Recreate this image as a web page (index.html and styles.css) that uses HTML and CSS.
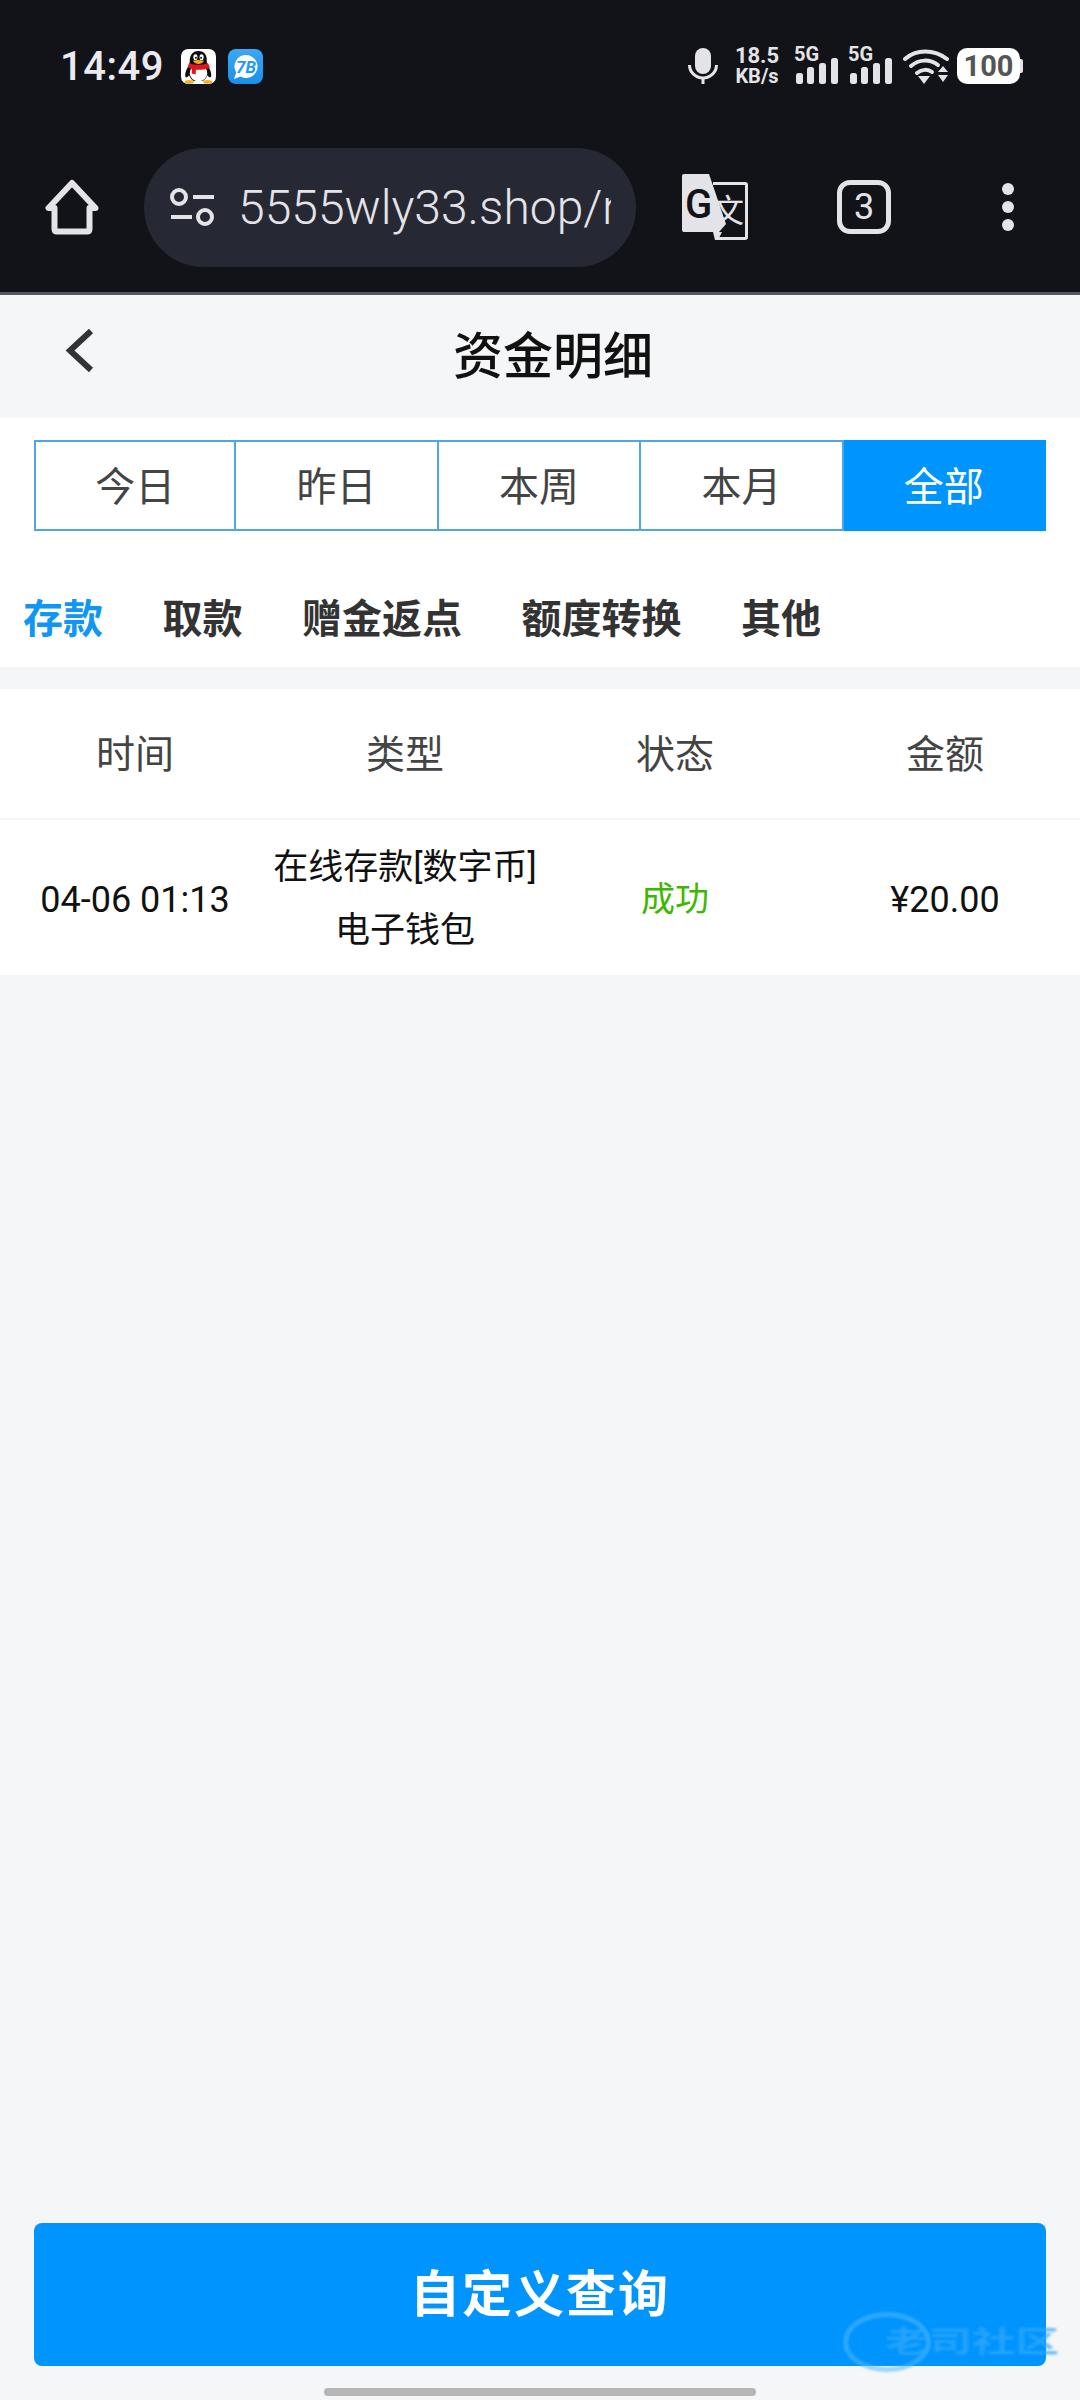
FILE: index.html
```html
<!DOCTYPE html>
<html lang="zh-CN">
<head>
<meta charset="utf-8">
<title>资金明细</title>
<link rel="stylesheet" href="styles.css">
</head>
<body>
<div class="page">
  <div class="chrome">
    <div class="status">
      <span class="time">14:49</span>
      <svg class="app app-qq" viewBox="0 0 34 34">
        <rect width="34" height="34" rx="7" fill="#fff"/>
        <ellipse cx="8" cy="32" rx="4.500" ry="1.800" fill="#f5b01c"/>
        <ellipse cx="26" cy="32" rx="4.500" ry="1.800" fill="#f5b01c"/>
        <path d="M17 2c-6 0-8.500 4.500-8.500 10 0 3-1.500 5-2.800 7.500C4 23 3.500 27 5 27.500c1 .2 2-.8 2.800-2 1 2.500 2.700 4.800 4.700 5.500h8.500c2-.7 3.700-3 4.700-5.500.8 1.200 1.800 2.200 2.800 2 1.500-.5 1-4.500-.7-8-1.300-2.500-2.800-4.500-2.800-7.500C25.500 6.500 23 2 17 2z" fill="#0c0c0e"/>
        <ellipse cx="17" cy="23.500" rx="8.500" ry="8" fill="#fff"/>
        <path d="M8 13.500c5 2.500 13 2.500 18 0 1 1.800 1.800 3.200 2 4.500-2.500 1.300-5 2-8 2.200H14.500l-.3 4.500-3.800-1 .2-4.500c-1.500-.3-2.800-.7-4-1.400.2-1.300.6-2.800 1.400-4.300z" fill="#e0161b"/>
        <ellipse cx="14" cy="8" rx="2" ry="2.800" fill="#fff"/>
        <ellipse cx="20" cy="8" rx="2" ry="2.800" fill="#fff"/>
        <circle cx="14.500" cy="8.500" r="1" fill="#111"/>
        <circle cx="19.500" cy="8.500" r="1" fill="#111"/>
        <path d="M11.500 11.500c3.500-1 7.500-1 11 0-1.500 2.200-3.500 3-5.500 3s-4-.8-5.500-3z" fill="#f5a81c"/>
      </svg>
      <svg class="app app-blue" viewBox="0 0 35 35">
        <defs>
          <linearGradient id="blueapp" x1="0" y1="0" x2="0" y2="1">
            <stop offset="0" stop-color="#3aa9f5"/>
            <stop offset="1" stop-color="#1a90ea"/>
          </linearGradient>
        </defs>
        <rect width="35" height="35" rx="8" fill="url(#blueapp)"/>
        <path d="M18 6a11.500 11.500 0 1 1-5.500 21.600L6 30l2.200-6.500A11.500 11.500 0 0 1 18 6z" fill="#fff"/>
        <text class="app-mark" x="18" y="23.500">7B</text>
      </svg>
      <span class="status-fill"></span>
      <svg class="mic" viewBox="0 0 30 36">
        <rect x="7" y="0" width="16" height="26" rx="8" fill="#e4e4e8"/>
        <path d="M1.500 17a13.500 13 0 0 0 27 0" fill="none" stroke="#e4e4e8" stroke-width="3"/>
        <rect x="13.500" y="29" width="3" height="7" fill="#e4e4e8"/>
      </svg>
      <span class="speed"><span>18.5</span><span>KB/s</span></span>
      <span class="signal">
        <span class="net">5G</span>
        <svg class="bars" viewBox="0 0 42 26"><rect x="0" y="15" width="7" height="11" rx="2.500"/><rect x="11" y="9" width="7" height="17" rx="2.500"/><rect x="23" y="5" width="7" height="21" rx="2.500"/><rect x="35" y="0" width="7" height="26" rx="2.500"/></svg>
      </span>
      <span class="signal">
        <span class="net">5G</span>
        <svg class="bars" viewBox="0 0 42 26"><rect x="0" y="15" width="7" height="11" rx="2.500"/><rect x="11" y="9" width="7" height="17" rx="2.500"/><rect x="23" y="5" width="7" height="21" rx="2.500"/><rect x="35" y="0" width="7" height="26" rx="2.500"/></svg>
      </span>
      <svg class="wifi" viewBox="0 0 46 36">
        <g fill="none" stroke="#e4e4e8" stroke-width="4" stroke-linecap="round">
          <path d="M2 11C13 1 31 1 44 11"/>
          <path d="M8 18c8-7 19-7 27-1"/>
          <path d="M14 25c5-4 11-4 15-1"/>
        </g>
        <path d="M15 28h12l-6 8zM35 24l5-6 5 6zM35 27h10l-5 7z" fill="#e4e4e8"/>
      </svg>
      <span class="battery">100</span>
    </div>
    <div class="toolbar">
      <svg class="home" viewBox="0 0 54 56">
        <path d="M27 4 3.500 29H9.500v21q0 2.500 2.500 2.500h30q2.500 0 2.500-2.500V29h6z" fill="none" stroke="#e4e4e8" stroke-width="6" stroke-linejoin="round"/>
      </svg>
      <div class="address">
        <svg class="tune" viewBox="0 0 44 38">
          <g fill="none" stroke="#e4e4e8" stroke-width="4">
            <circle cx="9" cy="9" r="7"/><circle cx="35" cy="29" r="7"/>
            <path d="M23 9h21M1 29h21"/>
          </g>
        </svg>
        <span class="url">5555wly33.shop/m</span>
      </div>
      <svg class="translate" viewBox="0 0 66 66">
        <path d="M31 9.500h32q1.500 0 1.500 1.500v52q0 1.500-1.500 1.500H36" fill="none" stroke="#e4e4e8" stroke-width="3"/>
        <text class="tr-w" x="46" y="48">文</text>
        <path d="M2 0h25l17 50-7 8H2q-2 0-2-2V2q0-2 2-2zM31 58h9l-4 8h-3z" fill="#e4e4e8"/>
        <text class="tr-g" x="16.500" y="44">G</text>
      </svg>
      <span class="tab-count">3</span>
      <span class="more"><i></i><i></i><i></i></span>
    </div>
  </div>
  <div class="rule"></div>
  <header class="nav">
    <svg class="back" viewBox="0 0 29 45"><path d="M26 3 5 22.500 26 42" fill="none" stroke="#333" stroke-width="6"/></svg>
    <h1 class="title">资金明细</h1>
  </header>
  <section class="filters">
    <div class="ranges">
      <span class="range">今日</span>
      <span class="range">昨日</span>
      <span class="range">本周</span>
      <span class="range">本月</span>
      <span class="range range-on">全部</span>
    </div>
    <div class="kinds">
      <span class="kind kind-on">存款</span>
      <span class="kind">取款</span>
      <span class="kind">赠金返点</span>
      <span class="kind">额度转换</span>
      <span class="kind">其他</span>
    </div>
  </section>
  <section class="table">
    <div class="row row-head">
      <span>时间</span><span>类型</span><span>状态</span><span>金额</span>
    </div>
    <div class="row row-body">
      <span class="num">04-06 01:13</span>
      <span class="type">在线存款[数字币]<br>电子钱包</span>
      <span class="ok">成功</span>
      <span class="num">¥20.00</span>
    </div>
  </section>
  <div class="spacer"></div>
  <button class="query">自定义查询</button>
  <div class="homebar"></div>
  <div class="mark">
    <span class="mark-ring"></span>
    <span class="mark-text">老司社区</span>
  </div>
</div>
</body>
</html>
```

FILE: styles.css
```css
* { box-sizing: border-box; }
html, body { margin: 0; padding: 0; }
body {
  width: 1080px;
  height: 2400px;
  overflow: hidden;
  background: #f5f6f8;
  font-family: Roboto, "Noto Sans CJK SC", sans-serif;
}
.page {
  position: relative;
  width: 1080px;
  height: 2400px;
  display: flex;
  flex-direction: column;
}
.chrome { height: 292px; background: #111318; color: #e4e4e8; }
.rule { height: 3px; background: #55575c; }

.status {
  display: flex;
  align-items: center;
  height: 132px;
  padding: 0 60px 0 60px;
}
.time { font-size: 40px; font-weight: 500; letter-spacing: 0.5px; width: 121px; color: #ebebef; }
.app { width: 35px; height: 35px; }
.app-blue { margin-left: 12px; }
.app-mark { font: italic 700 17px Roboto, sans-serif; fill: #1e9bf0; text-anchor: middle; }
.status-fill { flex: 1; }
.mic { width: 30px; height: 36px; }
.speed {
  display: flex;
  flex-direction: column;
  align-items: center;
  margin-left: 16px;
  width: 46px;
  font-size: 22px;
  line-height: 21px;
  font-weight: 700;
}
.speed span:last-child { font-size: 20px; }
.signal { position: relative; width: 42px; height: 36px; margin-left: 16px; display: block; }
.signal + .signal { margin-left: 12px; }
.net { position: absolute; left: -2px; top: -4px; font-size: 20px; font-weight: 700; line-height: 20px; }
.bars { position: absolute; left: 0; bottom: 0; width: 42px; height: 26px; fill: #e4e4e8; }
.wifi { width: 46px; height: 36px; margin-left: 11px; }
.battery {
  position: relative;
  width: 63px;
  height: 36px;
  margin-left: 8px;
  background: #fff;
  border-radius: 10px;
  color: #555;
  font-size: 29px;
  font-weight: 700;
  line-height: 36px;
  text-align: center;
}
.battery::after {
  content: "";
  position: absolute;
  right: -3px;
  top: 11px;
  width: 3px;
  height: 14px;
  background: #e4e4e8;
  border-radius: 0 2px 2px 0;
}

.toolbar {
  display: flex;
  align-items: center;
  height: 160px;
  padding: 0 0 0 45px;
  margin-top: -5px;
}
.home { width: 54px; height: 56px; }
.address {
  display: flex;
  align-items: center;
  width: 492px;
  height: 119px;
  margin-left: 45px;
  padding: 0 25px 0 26px;
  border-radius: 60px;
  background: #262933;
  overflow: hidden;
}
.tune { flex: none; width: 44px; height: 38px; }
.url {
  flex: 1;
  margin-left: 24px;
  overflow: hidden;
  white-space: nowrap;
  font-size: 48px;
  font-weight: 300;
  color: #e4e4e8;
}
.translate { width: 66px; height: 66px; margin-left: 46px; }
.tr-g { font: 500 40px Roboto, sans-serif; fill: #111318; text-anchor: middle; }
.tr-w { font: 400 32px "Noto Sans CJK SC", sans-serif; fill: #e4e4e8; text-anchor: middle; }
.tab-count {
  display: flex;
  align-items: center;
  justify-content: center;
  width: 54px;
  height: 54px;
  margin-left: 89px;
  border: 5px solid #e4e4e8;
  border-radius: 13px;
  font-size: 36px;
  font-weight: 400;
}
.more { display: flex; flex-direction: column; gap: 6px; margin-left: 111px; }
.more i { display: block; width: 12px; height: 12px; border-radius: 50%; background: #e4e4e8; }

.nav { display: flex; align-items: center; height: 123px; padding: 0 68px 0 65px; }
.back { width: 29px; height: 45px; margin-top: -12px; }
.title {
  flex: 1;
  margin: 0;
  text-align: center;
  font-size: 50px;
  font-weight: 500;
  color: #111;
  line-height: 70px;
}

.filters { height: 249px; padding: 22px 34px 0; background: #fff; }
.ranges {
  display: grid;
  grid-template-columns: repeat(5, 1fr);
  width: 1012px;
  height: 91px;
}
.range {
  display: flex;
  align-items: center;
  justify-content: center;
  padding-bottom: 4px;
  border: 2px solid #4ea6e6;
  border-left: 0;
  font-size: 40px;
  color: #444;
}
.range:first-child { border-left: 2px solid #4ea6e6; }
.range-on { background: #0094ff; color: #fff; border-color: #0094ff; }
.kinds {
  display: flex;
  gap: 59.5px;
  margin: 59px 0 0 -11px;
}
.kind { font-size: 40px; line-height: 60px; font-weight: 700; color: #333; }
.kind-on { color: #1296f3; }

.table { margin-top: 22px; background: #fff; }
.row { display: grid; grid-template-columns: repeat(4, 270px); align-items: center; text-align: center; }
.row-head { height: 131px; padding-bottom: 6px; border-bottom: 2px solid #f5f6f8; font-size: 39px; color: #444; }
.row-body { height: 155px; font-size: 35px; color: #111; }
.num { padding-top: 4px; font-size: 36px; }
.type { padding-top: 3px; line-height: 63px; }
.ok { padding-bottom: 2px; font-size: 34px; color: #3cb800; }

.spacer { flex: 1; }
.query {
  display: block;
  width: 1012px;
  height: 143px;
  margin: 0 0 34px 34px;
  padding: 0 0 10px;
  border: 0;
  border-radius: 8px;
  background: #0094ff;
  color: #fff;
  font-family: inherit;
  font-size: 50px;
  font-weight: 700;
  letter-spacing: 2px;
}
.homebar {
  position: absolute;
  left: 324px;
  bottom: 4px;
  width: 432px;
  height: 8px;
  border-radius: 4px;
  background: #b5b5b5;
}
.mark { position: absolute; left: 843px; top: 2310px; width: 220px; height: 64px; }
.mark-ring {
  position: absolute;
  left: 0;
  top: 2px;
  width: 88px;
  height: 60px;
  border: 5px solid rgba(80, 185, 255, 0.55);
  border-radius: 50%;
  filter: blur(1px);
}
.mark-text {
  position: absolute;
  left: 42px;
  top: 15px;
  width: 122px;
  font-size: 30px;
  line-height: 34px;
  font-weight: 700;
  white-space: nowrap;
  color: rgba(50, 170, 250, 0.7);
  transform: scaleX(1.45);
  transform-origin: left center;
  filter: blur(1px);
}
```
